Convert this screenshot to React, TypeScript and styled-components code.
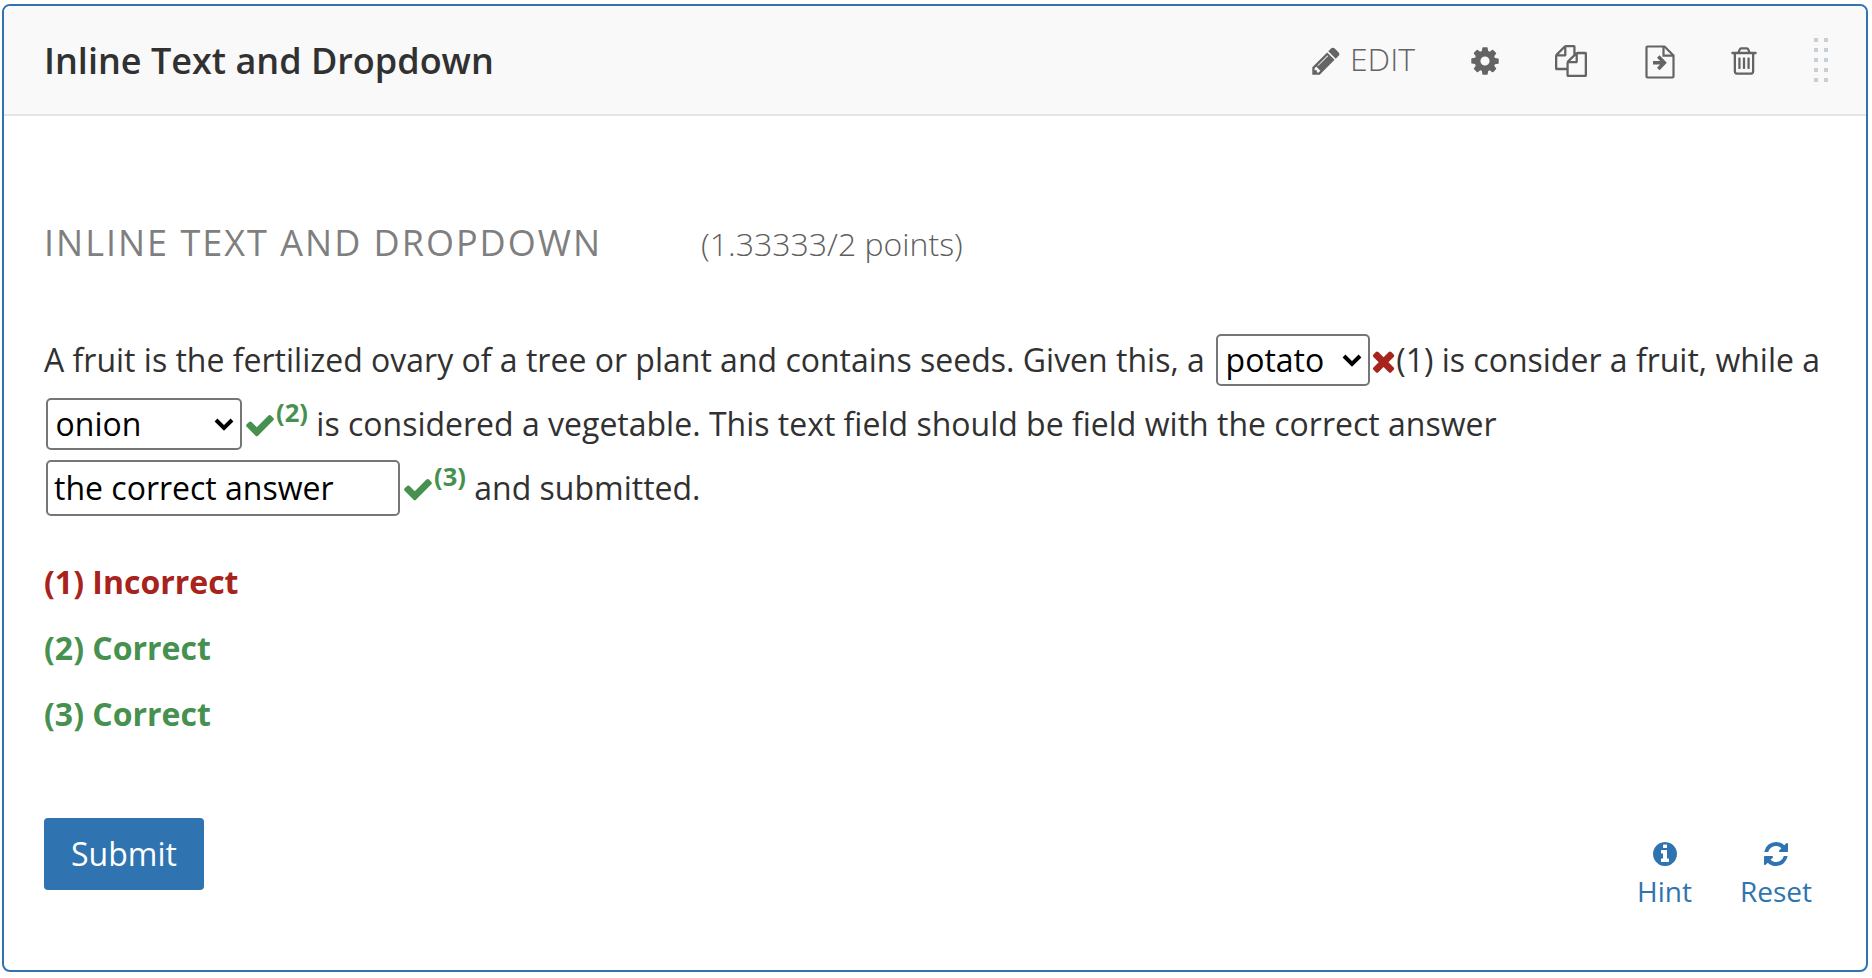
import React from "react";
import styled, { createGlobalStyle } from "styled-components";

const GlobalStyle = createGlobalStyle`
  *, *::before, *::after { box-sizing: border-box; }
  body { margin: 0; background: #fff; font-family: "Open Sans", sans-serif; color: #313131; }
`;

const Page = styled.main`
  width: 1872px;
  height: 978px;
  padding: 4px 4px 6px 2px;
  display: flex;
`;

const Card = styled.article`
  flex: 1;
  display: flex;
  flex-direction: column;
  border: 2px solid #2f74b0;
  border-radius: 8px;
  overflow: hidden;
  background: #fff;
`;

const Header = styled.header`
  display: flex;
  align-items: center;
  justify-content: space-between;
  height: 110px;
  padding: 0 38px 0 40px;
  background: #f9f9f9;
  border-bottom: 2px solid #e5e5e5;
`;

const Title = styled.h2`
  margin: 2px 0 0;
  font-size: 36px;
  line-height: 50px;
  font-weight: 600;
`;

const Actions = styled.div`
  display: flex;
  align-items: center;
  color: #646464;
`;

const Glyph = styled.svg<{ $width: number; $height: number }>`
  display: block;
  flex: none;
  width: ${(p) => p.$width}px;
  height: ${(p) => p.$height}px;
  fill: currentColor;
`;

const Action = styled.button<{ $gap?: number }>`
  display: flex;
  align-items: center;
  margin: 0 ${(p) => p.$gap ?? 0}px 0 0;
  padding: 0;
  border: 0;
  background: none;
  color: inherit;
  font: 300 32px/44px "Open Sans", sans-serif;

  ${Glyph} {
    margin-top: 1px;
  }
`;

const ActionLabel = styled.span`
  margin-left: 8px;
  padding-bottom: 2px;
`;

const MoveGlyph = styled.svg`
  display: block;
  width: 30px;
  height: 34px;
  margin-top: 4px;
`;

const Grip = styled.div`
  display: grid;
  grid-template-columns: 4px 4px;
  column-gap: 6px;
  row-gap: 6px;
`;

const GripDot = styled.i`
  width: 4px;
  height: 4px;
  background: #c8d0d6;
`;

const Body = styled.section`
  flex: 1;
  padding: 103px 40px 0;
`;

const Heading = styled.div`
  display: flex;
  align-items: baseline;
`;

const ProblemTitle = styled.h3`
  margin: 0 99px 0 0;
  font-size: 36px;
  line-height: 48px;
  font-weight: 400;
  letter-spacing: 2px;
  color: #7f7f7f;
  text-transform: uppercase;
`;

const Points = styled.span`
  font-size: 32px;
  line-height: 48px;
  font-weight: 300;
  color: #5e5e5e;
`;

const Question = styled.div`
  margin-top: 60px;
  font-size: 32px;
`;

const Line = styled.div`
  display: flex;
  align-items: center;
  height: 64px;
  white-space: pre;
`;

const Words = styled.span`
  padding-bottom: 2px;
`;

const SelectBox = styled.div<{ $width: number; $margin?: string }>`
  display: flex;
  align-items: center;
  justify-content: space-between;
  width: ${(p) => p.$width}px;
  height: 52px;
  margin: ${(p) => p.$margin ?? "0 2px"};
  padding: 0 6px 0 7.5px;
  border: 2px solid #767676;
  border-radius: 5px;
  color: #000;
`;

const Chevron = styled.svg`
  width: 20px;
  height: 14px;
  fill: none;
  stroke: #000;
  stroke-width: 4;
`;

const AnswerInput = styled.input`
  width: 354px;
  height: 56px;
  margin: 0 2px;
  padding: 0 6px 2px;
  border: 2px solid #767676;
  border-radius: 5px;
  background: #fff;
  color: #000;
  font: 400 32px "Open Sans", sans-serif;
`;

const Mark = styled.span<{ $ok?: boolean }>`
  display: flex;
  align-items: center;
  height: 100%;
  color: ${(p) => (p.$ok ? "#46914f" : "#a8231c")};

  ${Glyph} {
    margin-top: 1px;
  }
`;

const Sup = styled.sup`
  align-self: flex-start;
  margin-top: 3px;
  font-size: 25.6px;
  line-height: 35px;
  font-weight: 700;
`;

const Results = styled.div`
  margin-top: 29px;
`;

const Result = styled.p<{ $ok?: boolean }>`
  margin: 0;
  font-size: 32px;
  line-height: 66px;
  font-weight: 700;
  color: ${(p) => (p.$ok ? "#46914f" : "#a8231c")};
`;

const Footer = styled.footer`
  display: flex;
  justify-content: space-between;
  align-items: flex-start;
  margin-top: 71px;
`;

const Submit = styled.button`
  width: 160px;
  height: 72px;
  padding: 0 0 2px;
  border: 0;
  border-radius: 4px;
  background: #2f74b0;
  color: #fff;
  font: 400 32px "Open Sans", sans-serif;
`;

const Links = styled.div`
  display: flex;
  gap: 48px;
  padding: 22px 14px 0 0;
`;

const LinkButton = styled.button`
  display: flex;
  flex-direction: column;
  align-items: center;
  padding: 0;
  border: 0;
  background: none;
  color: #2f74b0;
  font: 400 28px/38px "Open Sans", sans-serif;
`;

const LinkLabel = styled.span`
  margin-top: 4px;
`;

const paths = {
  pencil: "M491 1536l91-91-235-235-91 91v107h128v128h107zm523-928q0-22-22-22-10 0-17 7l-542 542q-7 7-7 17 0 22 22 22 10 0 17-7l542-542q7-7 7-17zm-54-192l416 416-832 832h-416v-416zm683 96q0 53-37 90l-166 166-416-416 166-165q36-38 90-38 53 0 91 38l235 234q37 39 37 91z",
  cog: "M1152 896q0-106-75-181t-181-75-181 75-75 181 75 181 181 75 181-75 75-181zm512-109v222q0 12-8 23t-20 13l-185 28q-19 54-39 91 35 50 107 138 10 12 10 25t-9 23q-27 37-99 108t-94 71q-12 0-26-9l-138-108q-44 23-91 38-16 136-29 186-7 28-36 28h-222q-14 0-24.5-8.5t-11.5-21.5l-28-184q-49-16-90-37l-141 107q-10 9-25 9-14 0-25-11-126-114-165-168-7-10-7-23 0-12 8-23 15-21 51-66.5t54-70.5q-27-50-41-99l-183-27q-13-2-21-12.5t-8-23.5v-222q0-12 8-23t19-13l186-28q14-46 39-92-40-57-107-138-10-12-10-24 0-10 9-23 26-36 98.5-107.5t94.5-71.5q13 0 26 10l138 107q44-23 91-38 16-136 29-186 7-28 36-28h222q14 0 24.5 8.5t11.5 21.5l28 184q49 16 90 37l142-107q9-9 24-9 13 0 25 10 129 119 165 170 7 8 7 22 0 12-8 23-15 21-51 66.5t-54 70.5q26 50 41 98l183 28q13 2 21 12.5t8 23.5z",
  files: "M1696 384q40 0 68 28t28 68v1216q0 40-28 68t-68 28h-960q-40 0-68-28t-28-68v-288h-544q-40 0-68-28t-28-68v-672q0-40 20-88t48-76l408-408q28-28 76-48t88-20h416q40 0 68 28t28 68v328q68-40 128-40h416zm-544 213l-299 299h299v-299zm-640-384l-299 299h299v-299zm196 647l316-316v-416h-384v416q0 40-28 68t-68 28h-416v640h512v-256q0-40 20-88t48-76zm956 804v-1152h-384v416q0 40-28 68t-68 28h-416v640h896z",
  trash: "M704 736v576q0 14-9 23t-23 9h-64q-14 0-23-9t-9-23v-576q0-14 9-23t23-9h64q14 0 23 9t9 23zm256 0v576q0 14-9 23t-23 9h-64q-14 0-23-9t-9-23v-576q0-14 9-23t23-9h64q14 0 23 9t9 23zm256 0v576q0 14-9 23t-23 9h-64q-14 0-23-9t-9-23v-576q0-14 9-23t23-9h64q14 0 23 9t9 23zm128 724v-948h-896v948q0 22 7 40.5t14.5 27 10.5 8.5h832q3 0 10.5-8.5t14.5-27 7-40.5zm-672-1076h448l-48-117q-7-9-17-11h-317q-10 2-17 11zm928 32v64q0 14-9 23t-23 9h-96v948q0 83-47 143.5t-113 60.5h-832q-66 0-113-58.5t-47-141.5v-952h-96q-14 0-23-9t-9-23v-64q0-14 9-23t23-9h309l70-167q15-37 54-63t79-26h320q40 0 79 26t54 63l70 167h309q14 0 23 9t9 23z",
  check: "M1671 566q0 40-28 68l-724 724-136 136q-28 28-68 28t-68-28l-136-136-362-362q-28-28-28-68t28-68l136-136q28-28 68-28t68 28l294 295 656-657q28-28 68-28t68 28l136 136q28 28 28 68z",
  times: "M1490 1322q0 40-28 68l-136 136q-28 28-68 28t-68-28l-294-294-294 294q-28 28-68 28t-68-28l-136-136q-28-28-28-68t28-68l294-294-294-294q-28-28-28-68t28-68l136-136q28-28 68-28t68 28l294 294 294-294q28-28 68-28t68 28l136 136q28 28 28 68t-28 68l-294 294 294 294q28 28 28 68z",
  info: "M1152 1376v-160q0-14-9-23t-23-9h-96v-512q0-14-9-23t-23-9h-320q-14 0-23 9t-9 23v160q0 14 9 23t23 9h96v320h-96q-14 0-23 9t-9 23v160q0 14 9 23t23 9h448q14 0 23-9t9-23zm-128-896v-160q0-14-9-23t-23-9h-192q-14 0-23 9t-9 23v160q0 14 9 23t23 9h192q14 0 23-9t9-23zm640 416q0 209-103 385.5t-279.5 279.5-385.5 103-385.5-103-279.5-279.5-103-385.5 103-385.5 279.5-279.5 385.5-103 385.5 103 279.5 279.5 103 385.5z",
  refresh: "M1639 1056q0 5-1 7-64 268-268 434.5t-478 166.5q-146 0-282.5-55t-243.5-157l-129 129q-19 19-45 19t-45-19-19-45v-448q0-26 19-45t45-19h448q26 0 45 19t19 45-19 45l-137 137q71 66 161 102t187 36q134 0 250-65t186-179q11-17 53-117 8-23 30-23h192q13 0 22.5 9.5t9.5 22.5zm25-800v448q0 26-19 45t-45 19h-448q-26 0-45-19t-19-45 19-45l138-138q-148-137-349-137-134 0-250 65t-186 179q-11 17-53 117-8 23-30 23h-199q-13 0-22.5-9.5t-9.5-22.5v-7q65-268 270-434.5t480-166.5q146 0 284 55.5t245 156.5l130-129q19-19 45-19t45 19 19 45z",
};

type IconProps = { name: keyof typeof paths; size: number; inset?: number };

/* inset trims the same number of glyph units from the left and right side */
const Icon = ({ name, size, inset = 0 }: IconProps) => {
  const units = 1792 - inset * 2;
  return (
    <Glyph
      $width={(size * units) / 1792}
      $height={size}
      viewBox={`${inset} 0 ${units} 1792`}
      aria-hidden="true"
    >
      <path d={paths[name]} />
    </Glyph>
  );
};

const Dropdown = ({ value, width, margin }: { value: string; width: number; margin?: string }) => (
  <SelectBox $width={width} $margin={margin} role="combobox">
    <Words>{value}</Words>
    <Chevron viewBox="0 0 20 14">
      <path d="M2 3l8 8 8-8" />
    </Chevron>
  </SelectBox>
);

export default function App() {
  return (
    <Page>
      <GlobalStyle />
      <Card>
        <Header>
          <Title>Inline Text and Dropdown</Title>
          <Actions>
            <Action $gap={54}>
              <Icon name="pencil" size={32} />
              <ActionLabel>EDIT</ActionLabel>
            </Action>
            <Action $gap={54} aria-label="Settings"><Icon name="cog" size={32} /></Action>
            <Action $gap={58} aria-label="Duplicate"><Icon name="files" size={32} /></Action>
            <Action $gap={53} aria-label="Move">
              <MoveGlyph viewBox="0 0 30 34" fill="none" stroke="currentColor">
                <path
                  d="M1.500 2.500q0-1 1-1H19.500l9 9V31.500q0 1-1 1h-25q-1 0-1-1z"
                  strokeWidth="2.200"
                  strokeLinejoin="round"
                />
                <path d="M18.500 1.500V10.700H28.500" strokeWidth="2.200" />
                <path d="M8 17.700H19M13.300 11.500l6 6.200-6 6.200" strokeWidth="3.600" />
              </MoveGlyph>
            </Action>
            <Action $gap={54} aria-label="Delete"><Icon name="trash" size={32} /></Action>
            <Grip>
              {Array.from({ length: 10 }, (_, i) => <GripDot key={i} />)}
            </Grip>
          </Actions>
        </Header>
        <Body>
          <Heading>
            <ProblemTitle>Inline Text and Dropdown</ProblemTitle>
            <Points>(1.33333/2 points)</Points>
          </Heading>
          <Question>
            <Line>
              <Words>A fruit is the fertilized ovary of a tree or plant and contains seeds. Given this, a </Words>
              <Dropdown value="potato" width={154} margin="0 1px 0 3px" />
              <Mark><Icon name="times" size={32} inset={192} /></Mark>
              <Words>(1) is consider a fruit, while a</Words>
            </Line>
            <Line>
              <Dropdown value="onion" width={196} />
              <Mark $ok><Icon name="check" size={32} /><Sup>(2)</Sup></Mark>
              <Words> is considered a vegetable. This text field should be field with the correct answer</Words>
            </Line>
            <Line>
              <AnswerInput defaultValue="the correct answer" />
              <Mark $ok><Icon name="check" size={32} /><Sup>(3)</Sup></Mark>
              <Words> and submitted.</Words>
            </Line>
          </Question>
          <Results>
            <Result>(1) Incorrect</Result>
            <Result $ok>(2) Correct</Result>
            <Result $ok>(3) Correct</Result>
          </Results>
          <Footer>
            <Submit>Submit</Submit>
            <Links>
              <LinkButton><Icon name="info" size={28} /><LinkLabel>Hint</LinkLabel></LinkButton>
              <LinkButton><Icon name="refresh" size={28} /><LinkLabel>Reset</LinkLabel></LinkButton>
            </Links>
          </Footer>
        </Body>
      </Card>
    </Page>
  );
}
